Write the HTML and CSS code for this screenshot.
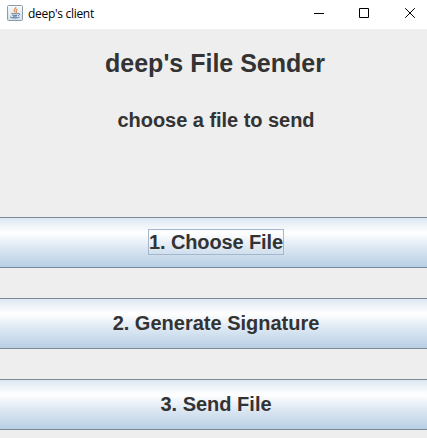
FILE: index.html
```html
<!DOCTYPE html>
<html lang="en">
<head>
<meta charset="utf-8">
<title>deep's client</title>
<link rel="stylesheet" href="styles.css">
</head>
<body>
<header class="titlebar">
  <svg class="app-icon" width="16" height="16" viewBox="0 0 16 16" fill="none">
    <defs><linearGradient id="tile" x1="0" y1="0" x2="0" y2="1"><stop offset="0" stop-color="#fafafa"/><stop offset="1" stop-color="#d3dfe9"/></linearGradient></defs>
    <rect x=".5" y=".5" width="15" height="15" rx="1" fill="url(#tile)" stroke="#8b9cab"/>
    <path d="M8.7 2c.8 1.6-2.4 2.2-1.5 4 .3.6.9 1 .8 1.7M10.5 4.2c-1.6.7-1.8 1.3-1.1 2.1.4.5.1 1-.3 1.3" stroke="#df8550" stroke-width="1.1"/>
    <path d="M4.5 8.4c1.7.6 4.7.6 6.3.1M5.2 10.2c1.4.6 3.7.6 5.1.1M11.1 8.5c2-.5 2.1 1.5 0 2.1M3.3 12c1.5 1.3 7.4 1.3 9.1.1M6 11.8c1.2.3 2.7.3 3.7 0" stroke="#56799c"/>
  </svg>
  <span class="caption">deep's client</span>
  <div class="controls">
    <svg class="minimize" width="10" height="10" viewBox="0 0 10 10" fill="none" stroke="#000"><path d="M0 5.5h10"/></svg>
    <svg width="10" height="10" viewBox="0 0 10 10" fill="none" stroke="#000"><path d="M.5.5h9v9h-9z"/></svg>
    <svg class="close" width="10" height="10" viewBox="0 0 10 10" fill="none" stroke="#000"><path d="M.2.2l9.6 9.6M9.8.2L.2 9.8"/></svg>
  </div>
</header>
<main class="content">
  <h1 class="title">deep's File Sender</h1>
  <p class="status">choose a file to send</p>
  <div class="actions">
    <button class="action"><span class="label focused">1. Choose File</span></button>
    <button class="action"><span class="label">2. Generate Signature</span></button>
    <button class="action"><span class="label">3. Send File</span></button>
  </div>
</main>
</body>
</html>
```
FILE: styles.css
```css
* { box-sizing: border-box; }
body {
  margin: 0;
  height: 438px;
  overflow: hidden;
  background: #eee;
  color: #333;
  font-family: "Liberation Sans", Arial, sans-serif;
}
.titlebar {
  display: flex;
  align-items: flex-start;
  height: 29px;
  padding: 5px 12px 0 7px;
  background: #fff;
  color: #000;
}
.caption {
  margin-left: 5px;
  font: 12px/17px "Open Sans", "Noto Sans", sans-serif;
  letter-spacing: -0.3px;
}
.controls {
  display: flex;
  margin: 3px 0 0 auto;
}
.controls svg, .app-icon { display: block; }
.minimize { margin-right: 35px; }
.close { margin-left: 36px; }
.title, .status {
  margin: 0;
  text-align: center;
  font-weight: bold;
}
.title {
  padding: 20px 0 0 3px;
  font-size: 25px;
  line-height: 29px;
}
.status {
  padding: 31px 0 0 5px;
  font-size: 20px;
  line-height: 23px;
  letter-spacing: -0.04px;
}
.actions {
  display: flex;
  flex-direction: column;
  gap: 30px;
  margin-top: 85px;
}
.action {
  display: flex;
  align-items: center;
  justify-content: center;
  height: 51px;
  padding: 0 0 0 5px;
  border: 0 solid #7a8a99;
  border-width: 1px 0;
  background: linear-gradient(#dde8f3, #fff 30%, #dde8f3 60%, #b8cfe5);
  color: #333;
  font: bold 20px/23px "Liberation Sans", Arial, sans-serif;
}
.label {
  padding: 0;
  border: 1px solid transparent;
}
.focused {
  width: 136px;
  height: 26px;
  margin-bottom: 1px;
  padding-top: 1px;
  border-color: #a3b8cc;
  letter-spacing: -0.12px;
  white-space: nowrap;
}
```
